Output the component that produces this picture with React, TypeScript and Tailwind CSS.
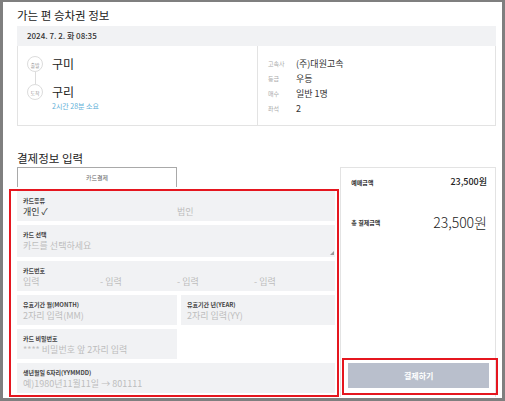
const Circle = ({ label }: { label: string }) => (
  <div className="flex h-4 w-4 items-center justify-center rounded-full border border-[#dcdcdc] bg-white text-[5px] leading-none text-[#999]">
    {label}
  </div>
);

const InfoRow = ({ label, value }: { label: string; value: string }) => (
  <div className="flex h-[15px] items-center">
    <span className="w-[28px] text-[6px] text-[#aaa]">{label}</span>
    <span className="text-[9px] text-[#333]">{value}</span>
  </div>
);

const Field = ({
  label,
  children,
  className,
}: {
  label: string;
  children: React.ReactNode;
  className?: string;
}) => (
  <div className={`relative h-[30px] bg-[#f1f2f4] pl-[6px] pt-[6px] ${className ?? ''}`}>
    <div className="text-[6px] font-bold leading-[8px] text-[#444]">{label}</div>
    <div className="mt-[1px] flex text-[9px] leading-[12px] text-[#bdbdbd]">{children}</div>
  </div>
);

const App = () => {
  return (
    <div className="h-[401px] w-[505px] overflow-hidden border-b-[3px] border-l-[3px] border-r-[3px] border-t-2 border-[#7f7f7f] bg-white font-['Noto_Sans_CJK_KR','Noto_Sans',sans-serif] text-[#222]">
      <div className="pl-[14px] pr-[6px]">
        <h2 className="mt-[4px] text-[11.5px] leading-[18px]">가는 편 승차권 정보</h2>

        {/* ticket */}
        <div className="mt-[2px]">
          <div className="flex h-[20px] items-center bg-[#f1f2f4] pl-[10px] text-[8px] font-medium text-[#333]">
            2024. 7. 2. 화 08:35
          </div>
          <div className="flex h-[80px] border-b border-l border-r border-[#e3e3e3]">
            <div className="flex w-[239px] pl-[9px] pt-[10px]">
              <div className="flex w-4 flex-col items-center">
                <Circle label="출발" />
                <div className="h-[12px] w-px bg-[#dcdcdc]" />
                <Circle label="도착" />
              </div>
              <div className="ml-[9px] flex flex-col">
                <div className="h-4 text-[12px] leading-4">구미</div>
                <div className="h-[12px]" />
                <div className="h-4 text-[12px] leading-4">구리</div>
                <div className="mt-[2px] text-[7px] leading-[9px] text-[#5fb0d8]">2시간 28분 소요</div>
              </div>
            </div>
            <div className="flex-1 border-l border-[#e3e3e3] pl-[10px] pt-[10px]">
              <InfoRow label="고속사" value="(주)대원고속" />
              <InfoRow label="등급" value="우등" />
              <InfoRow label="매수" value="일반 1명" />
              <InfoRow label="좌석" value="2" />
            </div>
          </div>
        </div>

        <h3 className="mt-[24px] text-[11.5px] leading-4">결제정보 입력</h3>

        <div className="mt-px flex h-[230px] gap-[5px]">
          {/* left: form */}
          <div className="w-[319px]">
            <div className="flex h-[20px] w-[160px] items-center justify-center border-l border-r border-t border-[#a9a9a9] text-[6px] text-[#666]">
              카드결제
            </div>
            <div className="-ml-[8px] -mr-[4px] mt-[2px] flex flex-col gap-[4px] border-2 border-[#e5161f] pb-[2px] pl-[6px] pr-[2px]">
              <Field label="카드종류">
                <span className="w-[154px] text-[#333]">개인 ✓</span>
                <span>법인</span>
              </Field>
              <Field label="카드 선택" className="h-[32px]">
                카드를 선택하세요
                <svg className="absolute bottom-[2px] right-[1px]" width="4" height="4" viewBox="0 0 4 4">
                  <path d="M4 0 L4 4 L0 4 Z" fill="#9a9a9a" />
                </svg>
              </Field>
              <Field label="카드번호">
                <span className="w-[77px]">입력</span>
                <span className="w-[77px]">- 입력</span>
                <span className="w-[77px]">- 입력</span>
                <span className="w-[77px]">- 입력</span>
              </Field>
              <div className="grid grid-cols-[160px_1fr] gap-[4px]">
                <Field label="유효기간 월(MONTH)">2자리 입력(MM)</Field>
                <Field label="유효기간 년(YEAR)">2자리 입력(YY)</Field>
                <Field label="카드 비밀번호">**** 비밀번호 앞 2자리 입력</Field>
              </div>
              <Field label="생년월일 6자리(YYMMDD)">예)1980년11월11일 → 801111</Field>
            </div>
          </div>

          {/* right: summary */}
          <div className="flex w-[156px] flex-col border-l border-r border-t border-[#e3e3e3]">
            <div className="mt-[8px] flex h-[12px] items-center justify-between pl-[10px] pr-[8px]">
              <span className="text-[6px] font-bold text-[#333]">예매금액</span>
              <span className="text-[9px] font-medium text-[#222]">23,500원</span>
            </div>
            <div className="mt-[26px] flex h-[16px] items-center justify-between pl-[10px] pr-[8px]">
              <span className="text-[6px] font-bold text-[#333]">총 결제금액</span>
              <span className="text-[14px] font-light text-[#222]">23,500원</span>
            </div>
            <div className="-mr-[3px] mb-[2px] ml-px mt-auto border-2 border-[#e5161f] pb-[5px] pl-[4px] pr-[7px] pt-[3px]">
              <button className="flex h-[25px] w-full items-center justify-center bg-[#b9bfcc] text-[8px] font-bold text-white">
                결제하기
              </button>
            </div>
          </div>
        </div>
      </div>
    </div>
  );
};

export default App;
